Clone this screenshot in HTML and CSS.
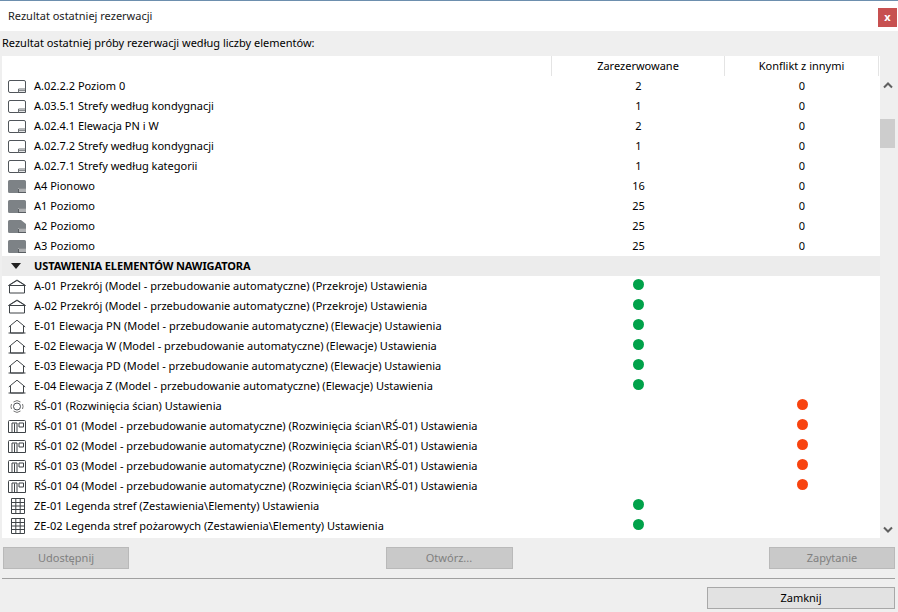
FILE: index.html
```html
<!DOCTYPE html>
<html lang="pl">
<head>
<meta charset="utf-8">
<title>Rezultat ostatniej rezerwacji</title>
<link rel="stylesheet" href="styles.css">
</head>
<body>
<svg class="defs" width="0" height="0">
  <defs>
    <symbol id="sheet" viewBox="0 0 18 15"><path d="M2 1.500H16A1.500 1.500 0 0 1 17.500 3V13.500H2A1.500 1.500 0 0 1 .5 12V3A1.500 1.500 0 0 1 2 1.500Z" fill="#fff" stroke="#50555a"/><path d="M10.500 13.500V10H17.500M11 11.700H17" fill="none" stroke="#6a6f73"/></symbol>
    <symbol id="sheetdark" viewBox="0 0 18 15"><path d="M1.500 1H16.500A1.500 1.500 0 0 1 18 2.500V14H1.500A1.500 1.500 0 0 1 0 12.500V2.500A1.500 1.500 0 0 1 1.500 1Z" fill="#7d8286"/><path d="M10 14V9.500H18V14Z" fill="#fff"/><path d="M10.500 14V10H18M11 12H18M11 13.500H18" stroke="#5a5f63" fill="none"/></symbol>
    <symbol id="sheetcut" viewBox="0 0 18 15"><path d="M1.500 1H13L18 5V14H1.500A1.500 1.500 0 0 1 0 12.500V2.500A1.500 1.500 0 0 1 1.500 1Z" fill="#7d8286"/><path d="M10 14V9.500H18V14Z" fill="#fff"/><path d="M10.500 14V10H18M11 12H18M11 13.500H18" stroke="#5a5f63" fill="none"/></symbol>
    <symbol id="section" viewBox="0 0 18 15"><path d="M1.500 14V6L9 1.500 16.500 6V14ZM.5 6.500 9 1 17.500 6.500ZM1.500 6.500H16.500" fill="#fff" stroke="#3e4347"/></symbol>
    <symbol id="elev" viewBox="0 0 18 15"><path d="M2.500 14V6.500L9 1.200 15.500 6.500V14ZM.8 8 2.500 6.500M17.200 8 15.500 6.500M.5 14H17.500" fill="#fff" stroke="#3e4347"/></symbol>
    <symbol id="interior" viewBox="0 0 18 15"><circle cx="9" cy="7.500" r="3.500" fill="none" stroke="#4a4f55"/><path d="M5.500 3A5.500 5.500 0 0 1 12.500 3M5.500 12A5.500 5.500 0 0 0 12.500 12M3.500 5A6 6 0 0 0 3.500 10M14.500 5A6 6 0 0 1 14.500 10" fill="none" stroke="#777"/></symbol>
    <symbol id="plan" viewBox="0 0 18 15"><path d="M1.500 1.500H16.500A1 1 0 0 1 17.500 2.500V13.500H.5V2.500A1 1 0 0 1 1.500 1.500Z" fill="#fff" stroke="#3e4347"/><path d="M4 13.500V4H9V13.500M6.500 4.500V13.500M11 4H15.500V8H11Z" fill="none" stroke="#3e4347"/></symbol>
    <symbol id="grid" viewBox="0 0 14 16"><path d="M.5 .5H13.500V15.500H.5ZM.5 4.500H13.500M.5 8H13.500M.5 11.500H13.500M4.800 .5V15.500M9.200 .5V15.500" fill="#fff" stroke="#3e4347"/></symbol>
  </defs>
</svg>
<div class="dialog">
  <header class="titlebar">
    <span class="title">Rezultat ostatniej rezerwacji</span>
    <span class="close">x</span>
  </header>
  <main class="content">
    <p class="caption">Rezultat ostatniej próby rezerwacji według liczby elementów:</p>
    <section class="listbox">
      <div class="table">
        <div class="row head"><span class="name"></span><span class="col">Zarezerwowane</span><span class="col">Konflikt z innymi</span></div>
        <div class="row"><span class="ic"><svg class="i18"><use href="#sheet"/></svg></span><span class="name">A.02.2.2 Poziom 0</span><span class="num">2</span><span class="num">0</span></div>
        <div class="row"><span class="ic"><svg class="i18"><use href="#sheet"/></svg></span><span class="name">A.03.5.1 Strefy według kondygnacji</span><span class="num">1</span><span class="num">0</span></div>
        <div class="row"><span class="ic"><svg class="i18"><use href="#sheet"/></svg></span><span class="name">A.02.4.1 Elewacja PN i W</span><span class="num">2</span><span class="num">0</span></div>
        <div class="row"><span class="ic"><svg class="i18"><use href="#sheet"/></svg></span><span class="name">A.02.7.2 Strefy według kondygnacji</span><span class="num">1</span><span class="num">0</span></div>
        <div class="row"><span class="ic"><svg class="i18"><use href="#sheet"/></svg></span><span class="name">A.02.7.1 Strefy według kategorii</span><span class="num">1</span><span class="num">0</span></div>
        <div class="row"><span class="ic"><svg class="i18"><use href="#sheetdark"/></svg></span><span class="name">A4 Pionowo</span><span class="num">16</span><span class="num">0</span></div>
        <div class="row"><span class="ic"><svg class="i18"><use href="#sheetdark"/></svg></span><span class="name">A1 Poziomo</span><span class="num">25</span><span class="num">0</span></div>
        <div class="row"><span class="ic"><svg class="i18"><use href="#sheetcut"/></svg></span><span class="name">A2 Poziomo</span><span class="num">25</span><span class="num">0</span></div>
        <div class="row"><span class="ic"><svg class="i18"><use href="#sheetdark"/></svg></span><span class="name">A3 Poziomo</span><span class="num">25</span><span class="num">0</span></div>
        <div class="row group"><span class="ic"><span class="tri"></span></span><span class="name">USTAWIENIA ELEMENTÓW NAWIGATORA</span></div>
        <div class="row"><span class="ic"><svg class="i18"><use href="#section"/></svg></span><span class="name">A-01 Przekrój (Model - przebudowanie automatyczne) (Przekroje) Ustawienia</span><span class="num"><i class="dot ok"></i></span><span class="num"></span></div>
        <div class="row"><span class="ic"><svg class="i18"><use href="#section"/></svg></span><span class="name">A-02 Przekrój (Model - przebudowanie automatyczne) (Przekroje) Ustawienia</span><span class="num"><i class="dot ok"></i></span><span class="num"></span></div>
        <div class="row"><span class="ic"><svg class="i18"><use href="#elev"/></svg></span><span class="name">E-01 Elewacja PN (Model - przebudowanie automatyczne) (Elewacje) Ustawienia</span><span class="num"><i class="dot ok"></i></span><span class="num"></span></div>
        <div class="row"><span class="ic"><svg class="i18"><use href="#elev"/></svg></span><span class="name">E-02 Elewacja W (Model - przebudowanie automatyczne) (Elewacje) Ustawienia</span><span class="num"><i class="dot ok"></i></span><span class="num"></span></div>
        <div class="row"><span class="ic"><svg class="i18"><use href="#elev"/></svg></span><span class="name">E-03 Elewacja PD (Model - przebudowanie automatyczne) (Elewacje) Ustawienia</span><span class="num"><i class="dot ok"></i></span><span class="num"></span></div>
        <div class="row"><span class="ic"><svg class="i18"><use href="#elev"/></svg></span><span class="name">E-04 Elewacja Z (Model - przebudowanie automatyczne) (Elewacje) Ustawienia</span><span class="num"><i class="dot ok"></i></span><span class="num"></span></div>
        <div class="row"><span class="ic"><svg class="i18"><use href="#interior"/></svg></span><span class="name">RŚ-01 (Rozwinięcia ścian) Ustawienia</span><span class="num"></span><span class="num"><i class="dot bad"></i></span></div>
        <div class="row"><span class="ic"><svg class="i18"><use href="#plan"/></svg></span><span class="name">RŚ-01 01 (Model - przebudowanie automatyczne) (Rozwinięcia ścian\RŚ-01) Ustawienia</span><span class="num"></span><span class="num"><i class="dot bad"></i></span></div>
        <div class="row"><span class="ic"><svg class="i18"><use href="#plan"/></svg></span><span class="name">RŚ-01 02 (Model - przebudowanie automatyczne) (Rozwinięcia ścian\RŚ-01) Ustawienia</span><span class="num"></span><span class="num"><i class="dot bad"></i></span></div>
        <div class="row"><span class="ic"><svg class="i18"><use href="#plan"/></svg></span><span class="name">RŚ-01 03 (Model - przebudowanie automatyczne) (Rozwinięcia ścian\RŚ-01) Ustawienia</span><span class="num"></span><span class="num"><i class="dot bad"></i></span></div>
        <div class="row"><span class="ic"><svg class="i18"><use href="#plan"/></svg></span><span class="name">RŚ-01 04 (Model - przebudowanie automatyczne) (Rozwinięcia ścian\RŚ-01) Ustawienia</span><span class="num"></span><span class="num"><i class="dot bad"></i></span></div>
        <div class="row"><span class="ic"><svg class="i14"><use href="#grid"/></svg></span><span class="name">ZE-01 Legenda stref (Zestawienia\Elementy) Ustawienia</span><span class="num"><i class="dot ok"></i></span><span class="num"></span></div>
        <div class="row"><span class="ic"><svg class="i14"><use href="#grid"/></svg></span><span class="name">ZE-02 Legenda stref pożarowych (Zestawienia\Elementy) Ustawienia</span><span class="num"><i class="dot ok"></i></span><span class="num"></span></div>
      </div>
      <aside class="scrollbar">
        <svg class="arrow up" width="10" height="7" viewBox="0 0 10 7"><path d="M1 5.500 5 1.500 9 5.500" fill="none" stroke="#606060" stroke-width="2"/></svg>
        <div class="thumb"></div>
        <svg class="arrow down" width="10" height="7" viewBox="0 0 10 7"><path d="M1 1.500 5 5.500 9 1.500" fill="none" stroke="#606060" stroke-width="2"/></svg>
      </aside>
    </section>
    <div class="actions">
      <button class="btn off">Udostępnij</button>
      <button class="btn off wide">Otwórz...</button>
      <button class="btn off">Zapytanie</button>
    </div>
    <hr class="rule">
    <div class="footer"><button class="btn main">Zamknij</button></div>
  </main>
</div>
</body>
</html>
```
FILE: styles.css
```css
* { box-sizing: border-box; }
html, body { margin: 0; padding: 0; }
body { width: 898px; height: 612px; overflow: hidden; background: #efefef; font-family: "Noto Sans", "Open Sans", sans-serif; font-size: 11px; color: #000; }
.defs { display: block; height: 0; }
.dialog { display: flex; flex-direction: column; height: 612px; border-top: 1px solid #6d8fae; }
.titlebar { height: 30px; flex: none; background: #fff; display: flex; align-items: center; justify-content: space-between; padding: 0 1px 0 8px; }
.title { font-size: 11px; color: #222; margin-bottom: 2px; }
.close { width: 19px; height: 19px; margin-top: 3px; background: #c75050; color: #fff; font-weight: 700; font-size: 11px; line-height: 17px; text-align: center; }
.content { flex: 1; display: flex; flex-direction: column; padding: 0 3px 0 2px; }
.caption { margin: 0; height: 25px; line-height: 23px; flex: none; }
.listbox { flex: none; height: 482px; display: flex; background: #fff; overflow: hidden; }
.table { width: 878px; flex: none; }
.row { display: flex; height: 20px; align-items: center; line-height: 19px; }
.ic { width: 32px; flex: none; display: flex; justify-content: flex-start; padding-left: 6px; }
.name { width: 518px; flex: none; white-space: nowrap; height: 20px; }
.num { width: 173px; flex: none; height: 20px; text-align: center; display: flex; justify-content: center; }
.num + .num { width: 154px; }
.head .name { width: 550px; border-right: 1px solid #e4e4e4; }
.col { width: 173px; flex: none; height: 20px; line-height: 20px; text-align: center; border-right: 1px solid #e4e4e4; }
.col + .col { width: 154px; }
.group { background: #ececec; font-weight: 700; }
.group .name { width: auto; letter-spacing: -0.1px; }
.tri { display: block; width: 0; height: 0; margin-left: 3px; border-left: 5.5px solid transparent; border-right: 5.5px solid transparent; border-top: 6px solid #222; }
.i18 { width: 18px; height: 15px; display: block; }
.i14 { width: 14px; height: 16px; display: block; margin-left: 3px; }
.dot { display: block; width: 11px; height: 11px; border-radius: 50%; margin-top: 3px; }
.ok { background: #00a24a; }
.bad { background: #f8430f; }
.scrollbar { background: #efefef; position: relative; width: 15px; flex: none; }
.arrow { position: absolute; left: 3px; }
.up { top: 26px; }
.down { bottom: 5px; }
.thumb { position: absolute; top: 63px; left: 0; width: 15px; height: 29px; background: #cdcdcd; }
.actions { height: 40px; flex: none; display: flex; justify-content: space-between; align-items: center; padding-left: 1px; }
.btn { width: 126px; height: 22px; padding: 0 0 2px; font-family: inherit; font-size: 11px; background: #c9c9c9; border: 1px solid #b9b9b9; border-radius: 0; }
.wide { width: 127px; }
.off { color: #808080; }
.rule { flex: none; height: 1px; margin: 0; border: 0; background: #a0a0a0; }
.footer { display: flex; justify-content: flex-end; padding-top: 8px; }
.main { width: 188px; height: 22px; background: #e2e2e2; border-color: #a8a8a8; color: #000; }
```
